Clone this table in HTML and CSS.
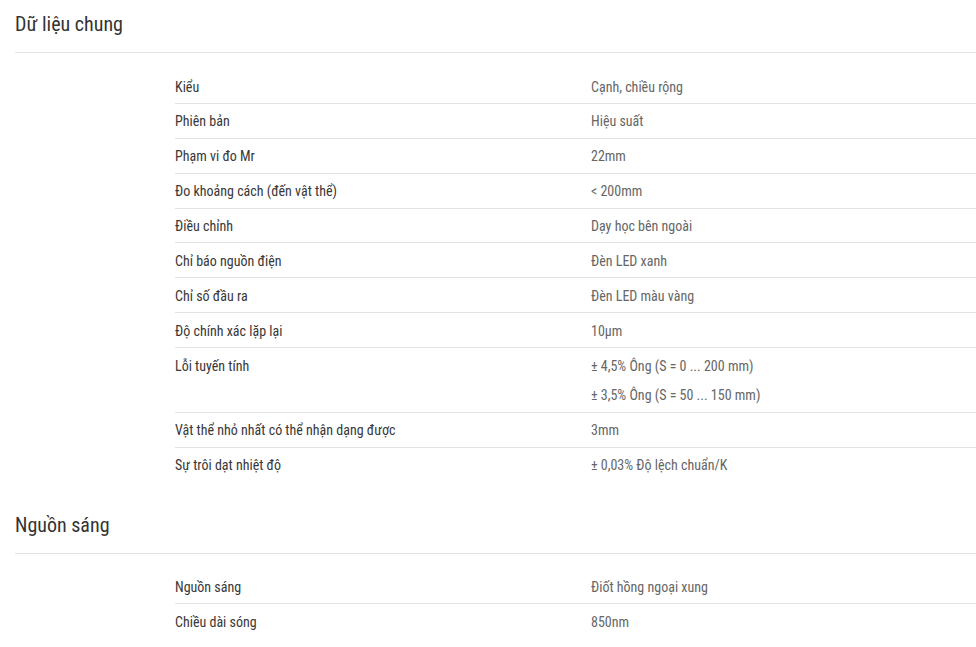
FILE: index.html
```html
<!DOCTYPE html>
<html lang="vi">
<head>
<meta charset="utf-8">
<link rel="stylesheet" href="styles.css">
</head>
<body>
<section class="group">
  <h2 class="group-title">Dữ liệu chung</h2>
  <div class="table">
    <div class="row"><div class="label">Kiểu</div><div class="value"><p>Cạnh, chiều rộng</p></div></div>
    <div class="row"><div class="label">Phiên bản</div><div class="value"><p>Hiệu suất</p></div></div>
    <div class="row"><div class="label">Phạm vi đo Mr</div><div class="value"><p>22mm</p></div></div>
    <div class="row"><div class="label">Đo khoảng cách (đến vật thể)</div><div class="value"><p>&lt; 200mm</p></div></div>
    <div class="row"><div class="label">Điều chỉnh</div><div class="value"><p>Dạy học bên ngoài</p></div></div>
    <div class="row"><div class="label">Chỉ báo nguồn điện</div><div class="value"><p>Đèn LED xanh</p></div></div>
    <div class="row"><div class="label">Chỉ số đầu ra</div><div class="value"><p>Đèn LED màu vàng</p></div></div>
    <div class="row"><div class="label">Độ chính xác lặp lại</div><div class="value"><p>10µm</p></div></div>
    <div class="row"><div class="label">Lỗi tuyến tính</div><div class="value"><p>± 4,5% Ông (S = 0 ... 200 mm)</p><p>± 3,5% Ông (S = 50 ... 150 mm)</p></div></div>
    <div class="row"><div class="label">Vật thể nhỏ nhất có thể nhận dạng được</div><div class="value"><p>3mm</p></div></div>
    <div class="row"><div class="label">Sự trôi dạt nhiệt độ</div><div class="value"><p>± 0,03% Độ lệch chuẩn/K</p></div></div>
  </div>
</section>
<section class="group">
  <h2 class="group-title">Nguồn sáng</h2>
  <div class="table">
    <div class="row"><div class="label">Nguồn sáng</div><div class="value"><p>Điốt hồng ngoại xung</p></div></div>
    <div class="row"><div class="label">Chiều dài sóng</div><div class="value"><p>850nm</p></div></div>
  </div>
</section>
</body>
</html>
```

FILE: styles.css
```css
html, body {
  margin: 0;
  padding: 0;
  background: #fff;
}
body {
  font-family: Roboto, "Liberation Sans", sans-serif;
  font-stretch: 80%;
  color: #333;
  padding-left: 15px;
  overflow: hidden;
}
.group-title {
  margin: 0;
  font-size: 20px;
  font-weight: 400;
  line-height: 24px;
  padding-top: 12px;
  padding-bottom: 16px;
  border-bottom: 1px solid #e2e2e2;
  color: #333;
}
.table {
  margin-left: 160px;
  padding-top: 16px;
  padding-bottom: 19px;
}
.row {
  display: flex;
  font-size: 14px;
  line-height: 29.89px;
  padding-top: 3.6px;
  padding-bottom: 0.4px;
  border-bottom: 1px solid #e2e2e2;
}
.row:last-child {
  border-bottom: none;
}
.label {
  width: 416px;
  flex: none;
  color: #383838;
}
.value {
  color: #666;
}
.value p {
  margin: 0;
}
```
